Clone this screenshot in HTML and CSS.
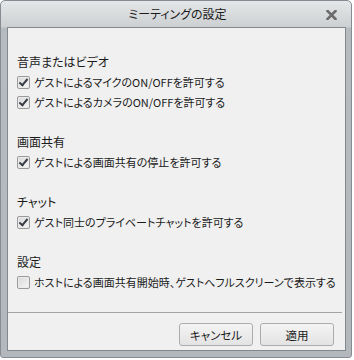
FILE: index.html
```html
<!DOCTYPE html>
<html lang="ja">
<head>
    <meta charset="UTF-8">
    <title>ミーティングの設定</title>
    <link rel="stylesheet" href="styles.css">
</head>
<body>
    <div class="window">
        <div class="titlebar">
            <span class="title">ミーティングの設定</span>
            <svg class="close" width="11" height="10" viewBox="0 0 11 10">
                <path d="M1.5 1 L9.5 9 M9.5 1 L1.5 9" stroke="#6c6c6c" stroke-width="2.6" stroke-linecap="square"/>
            </svg>
        </div>

        <div class="panel">
            <div class="content">
                <div class="section">
                    <div class="heading">音声またはビデオ</div>
                    <label class="option"><span class="box checked"></span>ゲストによるマイクのON/OFFを許可する</label>
                    <label class="option"><span class="box checked"></span>ゲストによるカメラのON/OFFを許可する</label>
                </div>
                <div class="section">
                    <div class="heading">画面共有</div>
                    <label class="option"><span class="box checked"></span>ゲストによる画面共有の停止を許可する</label>
                </div>
                <div class="section">
                    <div class="heading">チャット</div>
                    <label class="option"><span class="box checked"></span>ゲスト同士のプライベートチャットを許可する</label>
                </div>
                <div class="section">
                    <div class="heading">設定</div>
                    <label class="option"><span class="box"></span>ホストによる画面共有開始時、ゲストへフルスクリーンで表示する</label>
                </div>
            </div>

            <div class="footer">
                <button class="btn">キャンセル</button>
                <button class="btn">適用</button>
            </div>
        </div>
    </div>
</body>
</html>
```

FILE: styles.css
```css
* { margin: 0; padding: 0; box-sizing: border-box; }
body {
    background: #ffffff;
    font-family: "Noto Sans CJK JP", "Noto Sans", sans-serif;
    font-size: 11px;
    font-feature-settings: "palt";
    color: #1a1a1a;
}
.window {
    width: 352px;
    height: 358px;
    display: flex;
    flex-direction: column;
    padding: 0 5px 6px 6px;
    border: 1px solid #868c91;
    border-radius: 5px 5px 3px 3px;
    background: linear-gradient(#e4e6e7 0px, #cdd0d2 26px, #b6bbbf 27px, #b3b8bc 100%);
}
.titlebar {
    height: 26px;
    flex-shrink: 0;
    display: flex;
    align-items: center;
    justify-content: center;
    position: relative;
}
.title {
    font-size: 12px;
    line-height: 14px;
    margin-left: 2px;
}
.close {
    position: absolute;
    right: 9px;
    top: 9px;
}
.panel {
    flex: 1;
    min-height: 0;
    display: flex;
    flex-direction: column;
    background: #f0f0f0;
    border: 1px solid #82888d;
}
.content {
    flex: 1;
    padding: 24px 0 0 9px;
}
.section {
    margin-bottom: 20px;
}
.heading, .option {
    height: 20px;
    line-height: 20px;
    display: flex;
    align-items: center;
    white-space: nowrap;
}
.heading {
    font-size: 12px;
}
.box {
    flex-shrink: 0;
    width: 13px;
    height: 13px;
    margin-right: 4px;
    border: 1px solid #9a9a9a;
    border-radius: 2px;
    background: linear-gradient(135deg, #d8d8d8, #f6f6f6);
    box-shadow: inset 0 0 0 1px #ececec;
    position: relative;
}
.box.checked::after {
    content: "";
    position: absolute;
    left: 3px;
    top: 0px;
    width: 3px;
    height: 7px;
    border: solid #3a3f46;
    border-width: 0 2.5px 2.5px 0;
    transform: rotate(40deg);
}
.footer {
    flex-shrink: 0;
    border-top: 1px solid #a3a3a3;
    margin-right: 3px;
    height: 46px;
    display: flex;
    justify-content: flex-end;
    gap: 7px;
    padding: 10px 8px 0 0;
}
.btn {
    width: 74px;
    height: 23px;
    font-family: inherit;
    font-size: 11.5px;
    font-feature-settings: "palt";
    color: #1a1a1a;
    border: 1px solid #acacac;
    border-radius: 3px;
    background: linear-gradient(#f4f4f4, #e3e3e3);
}
```
